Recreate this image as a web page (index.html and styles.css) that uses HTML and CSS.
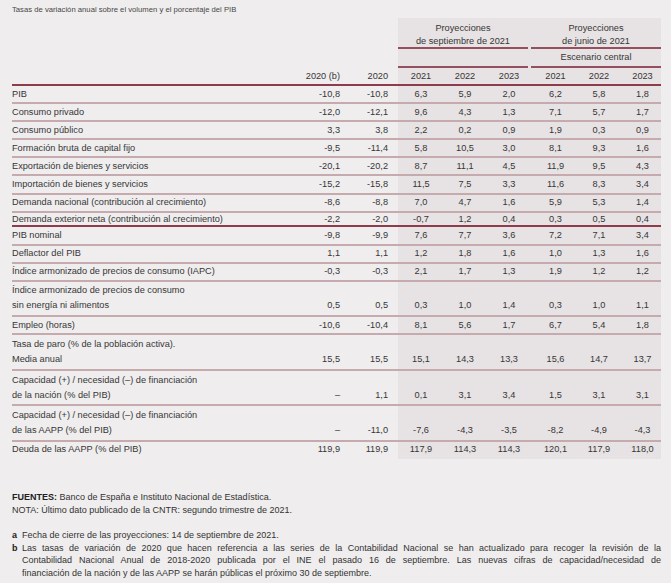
FILE: index.html
```html
<!DOCTYPE html>
<html lang="es">
<head>
<meta charset="utf-8">
<title>Proyecciones</title>
<link rel="stylesheet" href="styles.css">
</head>
<body>
<div class="page">
  <div class="title">Tasas de variación anual sobre el volumen y el porcentaje del PIB</div>
  <div class="table">
    <div class="hdr hdr1">
      <div></div><div></div><div></div>
      <div class="grp g1">Proyecciones<br>de septiembre de 2021</div>
      <div class="grp g2">Proyecciones<br>de junio de 2021</div>
    </div>
    <div class="hdr hdr2">
      <div></div><div></div><div></div>
      <div class="grp g1"></div>
      <div class="grp g2">Escenario central</div>
    </div>
    <div class="row years">
      <div></div><div class="n">2020 (b)</div><div class="n">2020</div>
      <div class="p1">2021</div><div class="p1">2022</div><div class="p1">2023</div>
      <div class="p2">2021</div><div class="p2">2022</div><div class="p2">2023</div>
    </div>

    <div class="row"><div class="l">PIB</div><div class="n">-10,8</div><div class="n">-10,8</div><div class="p1">6,3</div><div class="p1">5,9</div><div class="p1">2,0</div><div class="p2">6,2</div><div class="p2">5,8</div><div class="p2">1,8</div></div>
    <div class="row"><div class="l">Consumo privado</div><div class="n">-12,0</div><div class="n">-12,1</div><div class="p1">9,6</div><div class="p1">4,3</div><div class="p1">1,3</div><div class="p2">7,1</div><div class="p2">5,7</div><div class="p2">1,7</div></div>
    <div class="row"><div class="l">Consumo público</div><div class="n">3,3</div><div class="n">3,8</div><div class="p1">2,2</div><div class="p1">0,2</div><div class="p1">0,9</div><div class="p2">1,9</div><div class="p2">0,3</div><div class="p2">0,9</div></div>
    <div class="row"><div class="l">Formación bruta de capital fijo</div><div class="n">-9,5</div><div class="n">-11,4</div><div class="p1">5,8</div><div class="p1">10,5</div><div class="p1">3,0</div><div class="p2">8,1</div><div class="p2">9,3</div><div class="p2">1,6</div></div>
    <div class="row"><div class="l">Exportación de bienes y servicios</div><div class="n">-20,1</div><div class="n">-20,2</div><div class="p1">8,7</div><div class="p1">11,1</div><div class="p1">4,5</div><div class="p2">11,9</div><div class="p2">9,5</div><div class="p2">4,3</div></div>
    <div class="row"><div class="l">Importación de bienes y servicios</div><div class="n">-15,2</div><div class="n">-15,8</div><div class="p1">11,5</div><div class="p1">7,5</div><div class="p1">3,3</div><div class="p2">11,6</div><div class="p2">8,3</div><div class="p2">3,4</div></div>
    <div class="row"><div class="l">Demanda nacional (contribución al crecimiento)</div><div class="n">-8,6</div><div class="n">-8,8</div><div class="p1">7,0</div><div class="p1">4,7</div><div class="p1">1,6</div><div class="p2">5,9</div><div class="p2">5,3</div><div class="p2">1,4</div></div>
    <div class="row short"><div class="l">Demanda exterior neta (contribución al crecimiento)</div><div class="n">-2,2</div><div class="n">-2,0</div><div class="p1">-0,7</div><div class="p1">1,2</div><div class="p1">0,4</div><div class="p2">0,3</div><div class="p2">0,5</div><div class="p2">0,4</div></div>
    <div class="row"><div class="l">PIB nominal</div><div class="n">-9,8</div><div class="n">-9,9</div><div class="p1">7,6</div><div class="p1">7,7</div><div class="p1">3,6</div><div class="p2">7,2</div><div class="p2">7,1</div><div class="p2">3,4</div></div>
    <div class="row"><div class="l">Deflactor del PIB</div><div class="n">1,1</div><div class="n">1,1</div><div class="p1">1,2</div><div class="p1">1,8</div><div class="p1">1,6</div><div class="p2">1,0</div><div class="p2">1,3</div><div class="p2">1,6</div></div>
    <div class="row"><div class="l">Índice armonizado de precios de consumo (IAPC)</div><div class="n">-0,3</div><div class="n">-0,3</div><div class="p1">2,1</div><div class="p1">1,7</div><div class="p1">1,3</div><div class="p2">1,9</div><div class="p2">1,2</div><div class="p2">1,2</div></div>
    <div class="row tall"><div class="l">Índice armonizado de precios de consumo<br>sin energía ni alimentos</div><div class="n">0,5</div><div class="n">0,5</div><div class="p1">0,3</div><div class="p1">1,0</div><div class="p1">1,4</div><div class="p2">0,3</div><div class="p2">1,0</div><div class="p2">1,1</div></div>
    <div class="row"><div class="l">Empleo (horas)</div><div class="n">-10,6</div><div class="n">-10,4</div><div class="p1">8,1</div><div class="p1">5,6</div><div class="p1">1,7</div><div class="p2">6,7</div><div class="p2">5,4</div><div class="p2">1,8</div></div>
    <div class="row tall"><div class="l">Tasa de paro (% de la población activa).<br>Media anual</div><div class="n">15,5</div><div class="n">15,5</div><div class="p1">15,1</div><div class="p1">14,3</div><div class="p1">13,3</div><div class="p2">15,6</div><div class="p2">14,7</div><div class="p2">13,7</div></div>
    <div class="row tall"><div class="l">Capacidad (+) / necesidad (–) de financiación<br>de la nación (% del PIB)</div><div class="n">–</div><div class="n">1,1</div><div class="p1">0,1</div><div class="p1">3,1</div><div class="p1">3,4</div><div class="p2">1,5</div><div class="p2">3,1</div><div class="p2">3,1</div></div>
    <div class="row tall"><div class="l">Capacidad (+) / necesidad (–) de financiación<br>de las AAPP (% del PIB)</div><div class="n">–</div><div class="n">-11,0</div><div class="p1">-7,6</div><div class="p1">-4,3</div><div class="p1">-3,5</div><div class="p2">-8,2</div><div class="p2">-4,9</div><div class="p2">-4,3</div></div>
    <div class="row last"><div class="l">Deuda de las AAPP (% del PIB)</div><div class="n">119,9</div><div class="n">119,9</div><div class="p1">117,9</div><div class="p1">114,3</div><div class="p1">114,3</div><div class="p2">120,1</div><div class="p2">117,9</div><div class="p2">118,0</div></div>
  </div>

  <div class="notes">
    <div><b>FUENTES:</b> Banco de España e Instituto Nacional de Estadística.</div>
    <div>NOTA: Último dato publicado de la CNTR: segundo trimestre de 2021.</div>
    <div class="fns">
      <div class="fn"><b>a</b><div>Fecha de cierre de las proyecciones: 14 de septiembre de 2021.</div></div>
      <div class="fn"><b>b</b><div>
        <span class="jl">Las tasas de variación de 2020 que hacen referencia a las series de la Contabilidad Nacional se han actualizado para recoger la revisión de la</span>
        <span class="jl">Contabilidad Nacional Anual de 2018-2020 publicada por el INE el pasado 16 de septiembre. Las nuevas cifras de capacidad/necesidad de</span>
        <span class="ll">financiación de la nación y de las AAPP se harán públicas el próximo 30 de septiembre.</span>
      </div></div>
    </div>
  </div>
</div>
</body>
</html>
```
FILE: styles.css
```css
body {
  margin: 0;
  background: #efeded;
  font-family: "Liberation Sans", Arial, sans-serif;
  color: #363636;
}
.page {
  padding: 5px 10px 0 12px;
}
.title {
  font-size: 7.7px;
  line-height: 10px;
  color: #474747;
}
.table {
  margin-top: 3px;
  font-size: 9.2px;
  background: linear-gradient(to right, transparent 386px, #e7e2e3 386px);
}
.hdr {
  display: grid;
  grid-template-columns: 1fr 60px 48px 132px 131px;
  text-align: center;
}
.hdr1 .grp {
  padding-top: 4px;
  line-height: 12.5px;
  border-bottom: 2px solid #94505e;
}
.hdr2 .grp {
  line-height: 17px;
  border-bottom: 2px solid #94505e;
}
.g1 { margin-right: 2px; }
.g2 { margin-left: 1px; }
.row {
  display: grid;
  grid-template-columns: 1fr 60px 48px 44px 44px 44px 44px 43px 44px;
  line-height: 15px;
  padding: 0.55px 0;
  border-bottom: 2px solid #c5aaae;
}
.row.years {
  line-height: 16px;
  padding: 0;
  border-bottom: 2.5px solid #8e3b4c;
}
.row.short {
  line-height: 12.8px;
  padding: 0;
  border-bottom: 2.5px solid #8e3b4c;
}
.row.tall {
  padding: 1.75px 0;
}
.row.tall > div:not(.l) {
  align-self: end;
}
.row.last {
  border-bottom: none;
  padding-bottom: 1.6px;
}
.n {
  text-align: right;
  padding-right: 10px;
}
.p1 {
  text-align: center;
  padding-left: 2px;
}
.p2 {
  text-align: center;
  padding-left: 7px;
}
.notes {
  margin-top: 32px;
  font-size: 9px;
  line-height: 12.6px;
  color: #333;
}
.notes b { color: #222; }
.fns { margin-top: 13px; }
.fn {
  display: grid;
  grid-template-columns: 10px 1fr;
}
.jl {
  display: block;
  text-align: justify;
  text-align-last: justify;
}
.ll { display: block; }
```
